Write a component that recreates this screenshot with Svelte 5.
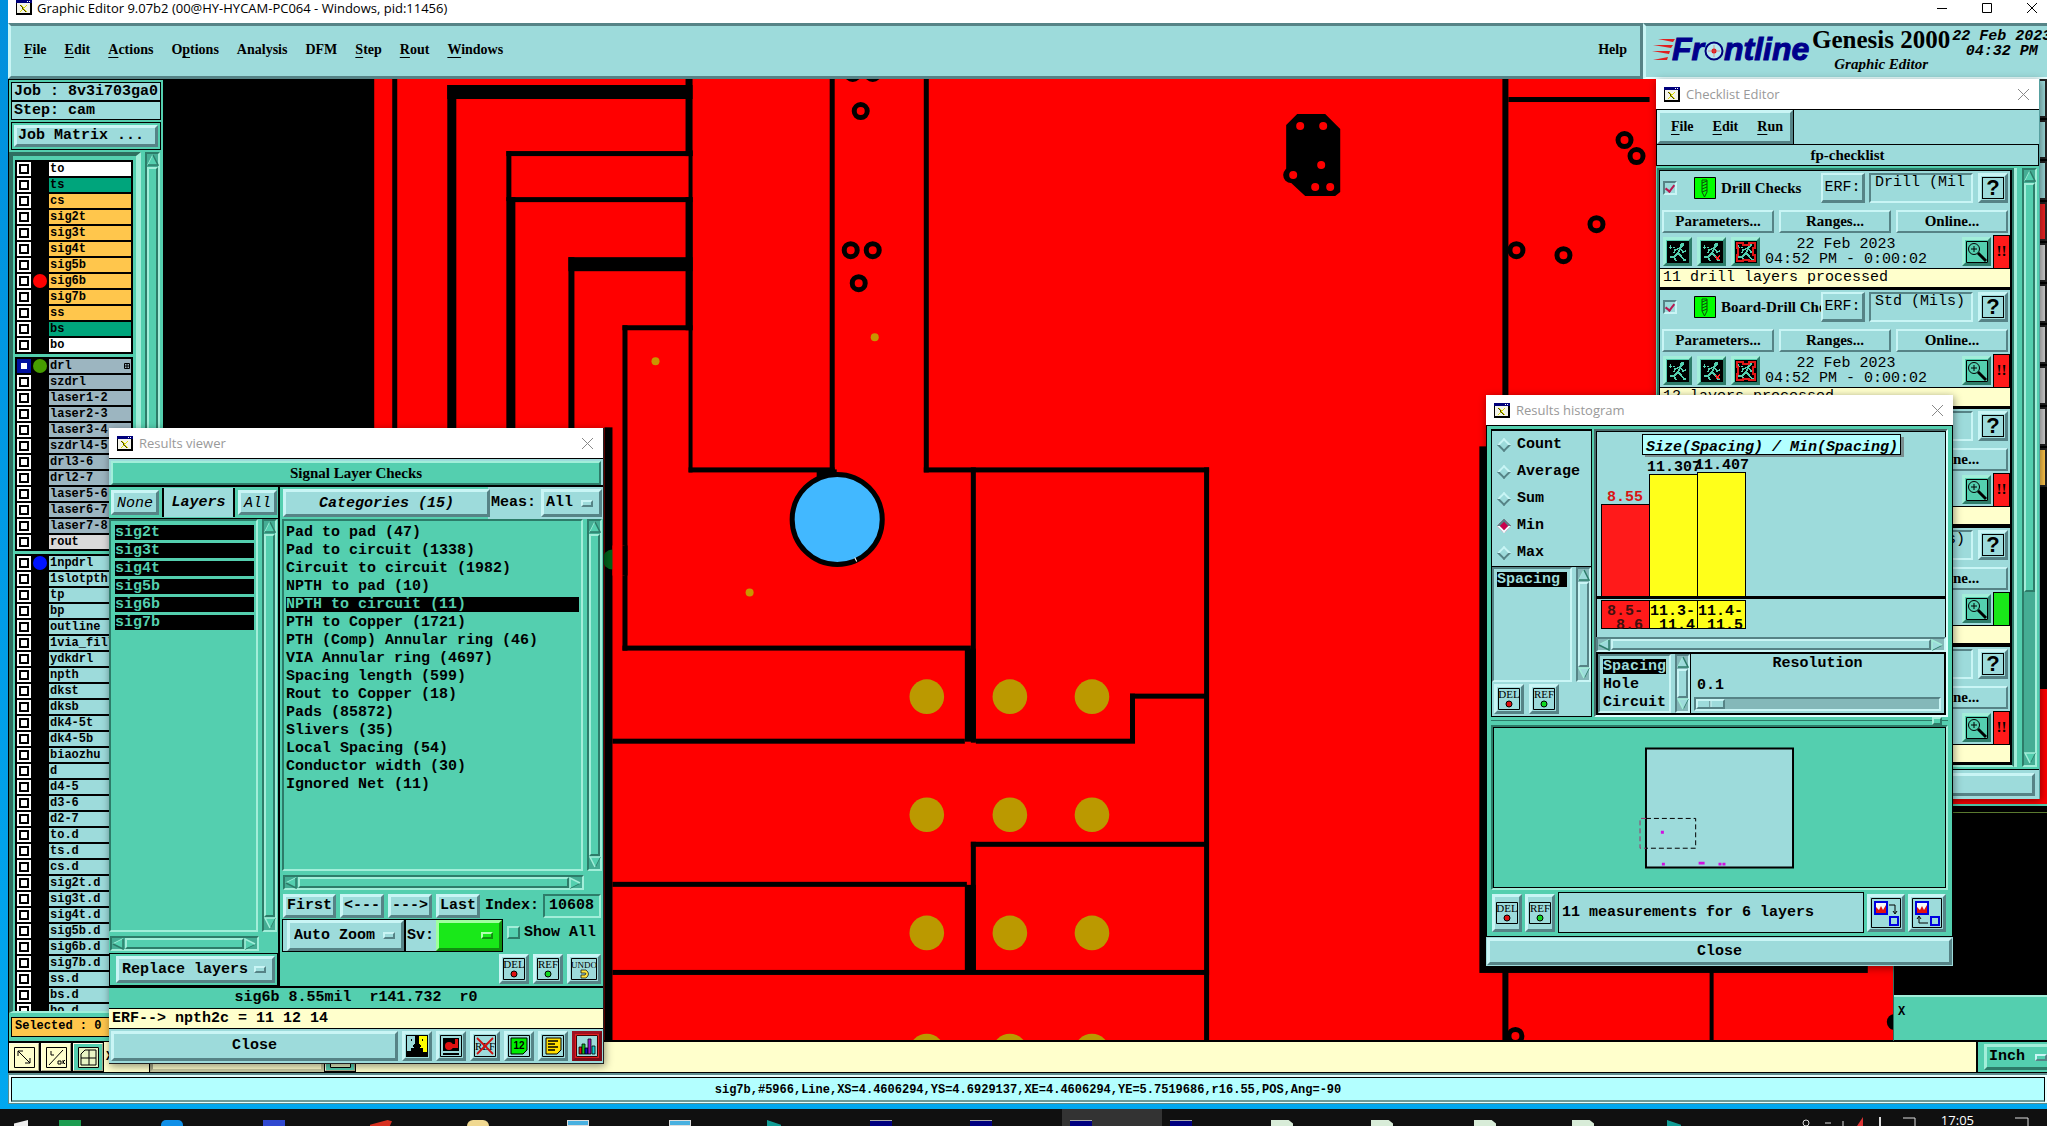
<script lang="ts">
  const menus = [
    ['F', 'ile'], ['E', 'dit'], ['A', 'ctions'], ['O', 'ptions', 1], ['', 'Analysis'],
    ['', 'DFM'], ['S', 'tep'], ['R', 'out'], ['W', 'indows']
  ];

  type Layer = { name: string; tone: string; dot?: string; on?: boolean; mark?: boolean };
  const mk = (names: string, tone: string): Layer[] => names.split(' ').map((name) => ({ name, tone }));

  const groups: Layer[][] = [
    [
      { name: 'to', tone: 'white' }, { name: 'ts', tone: 'green' },
      ...mk('cs sig2t sig3t sig4t sig5b', 'amber'),
      { name: 'sig6b', tone: 'amber', dot: 'red' },
      ...mk('sig7b ss', 'amber'),
      { name: 'bs', tone: 'green' }, { name: 'bo', tone: 'white' }
    ],
    [
      { name: 'drl', tone: 'slate', dot: 'olive', on: true, mark: true },
      ...mk('szdrl laser1-2 laser2-3 laser3-4 szdrl4-5 drl3-6 drl2-7 laser5-6 laser6-7 laser7-8', 'slate'),
      { name: 'rout', tone: 'silver' }
    ],
    [
      { name: '1npdrl', tone: 'aqua', dot: 'blue' },
      ...mk('1slotpth tp bp outline 1via_fill ydkdrl npth dkst dksb dk4-5t dk4-5b biaozhu d d4-5 d3-6 d2-7 to.d ts.d cs.d sig2t.d sig3t.d sig4t.d sig5b.d sig6b.d sig7b.d ss.d bs.d bo.d', 'aqua')
    ]
  ];

  const sigLayers = ['sig2t', 'sig3t', 'sig4t', 'sig5b', 'sig6b', 'sig7b'];
  const categories = [
    'Pad to pad (47)', 'Pad to circuit (1338)', 'Circuit to circuit (1982)', 'NPTH to pad (10)',
    'NPTH to circuit (11)', 'PTH to Copper (1721)', 'PTH (Comp) Annular ring (46)',
    'VIA Annular ring (4697)', 'Spacing length (599)', 'Rout to Copper (18)', 'Pads (85872)',
    'Slivers (35)', 'Local Spacing (54)', 'Conductor width (30)', 'Ignored Net (11)'
  ];
  let category = $state(4);

  const checks = [
    { name: 'Drill Checks', erf: 'Drill (Mil', note: '11 drill layers processed', ok: false },
    { name: 'Board-Drill Che', erf: 'Std (Mils)', note: '12 layers processed', ok: false },
    { name: 'Signal Layer', erf: 'Outer', note: '', ok: false },
    { name: 'Power Checks', erf: 'Std (Mils)', note: '', ok: true },
    { name: 'Solder Mask', erf: 'Outer', note: '', ok: false }
  ];

  const stats = ['Count', 'Average', 'Sum', 'Min', 'Max'];
  let stat = $state('Min');

  const bars = [
    { v: '8.55', lo: '8.5-', hi: '8.6', x: 4, end: 46, top: 72, fill: '#ff1a1a', ink: '#d91414', lab: '#401010' },
    { v: '11.307', lo: '11.3-', hi: '11.4', x: 52, end: 98, top: 42, fill: '#ffff1a', ink: '#000', lab: '#000' },
    { v: '11.407', lo: '11.4-', hi: '11.5', x: 100, end: 146, top: 40, fill: '#ffff1a', ink: '#000', lab: '#000' }
  ];

  const padX = [926, 1009, 1091];
  const padY = [696, 814, 932, 1050];
  const vias = [[860, 111], [850, 250], [872, 250], [858, 283], [852, 73], [872, 73], [1623, 140], [1635, 156], [1595, 224], [1562, 255], [1515, 250], [1514, 1035]];
  // black gaps in the copper: x, y, width, height
  const gaps = [
    [392, 79, 5, 360], [447, 85, 9, 360], [447, 85, 245, 14], [506, 151, 5, 50], [506, 197, 9, 240],
    [506, 151, 186, 5], [511, 197, 181, 5], [568, 257, 6, 180], [568, 257, 124, 14], [685, 79, 7, 77],
    [688, 150, 4, 322], [685, 197, 7, 133], [622, 325, 70, 5], [622, 325, 5, 325], [622, 645, 348, 5],
    [829, 79, 5, 392], [688, 467, 146, 5], [816, 469, 20, 9], [923, 79, 5, 393], [923, 467, 285, 5],
    [970, 467, 5, 275], [964, 648, 11, 93], [612, 738, 352, 5], [975, 738, 159, 5], [1129, 693, 5, 49],
    [1129, 693, 78, 5], [1203, 467, 5, 580], [970, 841, 236, 5], [970, 841, 5, 131], [964, 884, 11, 88],
    [612, 881, 354, 5], [612, 969, 596, 5], [604, 427, 8, 620], [1501, 79, 6, 970], [1507, 97, 141, 5],
    [1478, 446, 388, 526], [1708, 970, 4, 80]
  ];
  const tasks = [
    [24, 'win'], [69, 'green'], [171, 'sky'], [273, 'disk'], [380, 'fox'], [477, 'folder'], [577, 'screen'],
    [679, 'screen'], [777, 'bird'], [880, 'term'], [980, 'term'], [1080, 'term'], [1180, 'term'],
    [1281, 'doc'], [1381, 'doc'], [1484, 'doc'], [1582, 'doc'], [1677, 'bird']
  ];
</script>

{#snippet arrow(dir: string)}
  <button class="arrow" aria-label={'Scroll ' + dir}>
    <svg viewBox="0 0 12 12" width="12" height="12">
      {#if dir === 'up'}<path class="l" d="M6 1 1 11M6 1v0" /><path class="d" d="M6 1l5 10H1" />
      {:else if dir === 'down'}<path class="d" d="M11 1 6 11" /><path class="l" d="M6 11 1 1h10" />
      {:else if dir === 'left'}<path class="l" d="M11 1 1 6" /><path class="d" d="M1 6l10 5V1" />
      {:else}<path class="d" d="M1 11 11 6" /><path class="l" d="M11 6 1 1v10" />{/if}
    </svg>
  </button>
{/snippet}

{#snippet vbar(tone: string)}
  <div class="vbar {tone}">{@render arrow('up')}<div class="thumb"></div>{@render arrow('down')}</div>
{/snippet}
{#snippet hbar(tone: string)}
  <div class="hbar {tone}">{@render arrow('left')}<div class="thumb"></div>{@render arrow('right')}</div>
{/snippet}

{#snippet appIcon()}
  <svg class="app-icon" viewBox="0 0 16 15" width="16" height="15" shape-rendering="crispEdges">
    <path d="M0 0h16v15H0z" fill="#000" /><path d="M1 3h13v10H1z" fill="#f4f4ea" /><path d="M0 0h16v3H0z" fill="#00007b" />
    <path d="M11 1h1v1h-1zM13 1h1v1h-1z" fill="#fff" />
    <path d="M4 5h2l5 7H9z" fill="#444400" /><path d="M10 5h1l-6 7H3z" fill="#d8d800" /><path d="M5 5h1l5 7h-1z" fill="#d8d800" />
  </svg>
{/snippet}

{#snippet tag(label: string, color: string)}
  {@const w = color ? 22 : 26}
  <svg viewBox="0 0 {w} 22" width={w} height="22">
    <path d="M.5.5h{w - 1}v21H.5z" fill="none" stroke="#000" />
    <text x={w / 2} y="10" text-anchor="middle" class={color ? 'tiny' : 'tiny narrow'}>{label}</text>
    {#if color}<circle cx="11" cy="16" r="3" fill={color} stroke="#000" />
    {:else}<path d="M10 12h5q5 4 0 8h-5v-3h4q2-2 0-2h-4z" fill="#ffe640" stroke="#000" stroke-width=".7" />{/if}
  </svg>
{/snippet}

{#snippet runner(kind: number)}
  <svg viewBox="0 0 22 22" width="22" height="22" shape-rendering="crispEdges">
    <path d="M0 0h22v22H0z" fill="#000" />
    <g fill="none" stroke="#54cfaf" stroke-width="1.6">
      <circle cx="15" cy="4" r="1.2" fill="#54cfaf" />
      <path d="M14 6 11 12M13 7 8 9l-1 3M14 8l2 3 3-1M11 12l3 3 3 4h2M11 12l-4 4H3M7 16l2 4" />
      <path d="M2 6h3M6 6h2M3 4v4" stroke-width="1" />
    </g>
    {#if kind === 1}<path d="M14 15l5 4M19 14l-4 5" stroke="#f22" stroke-width="1.4" />{/if}
    {#if kind === 2}<path d="M2 2h6v2h6V2h6v5h-2v7h2v6h-6v-1H8v1H2v-6h1V7H2z" fill="none" stroke="#e01818" stroke-width="1.3" />{/if}
  </svg>
{/snippet}

{#snippet mag()}
  <svg viewBox="0 0 22 22" width="22" height="22">
    <path d="M.5.5h21v21H.5z" fill="none" stroke="#000" />
    <circle cx="8" cy="8" r="5.5" fill="none" stroke="#000" /><path d="M5 8h6M8 5v6" stroke="#000" />
    <path d="M12 12l8 8" stroke="#000" stroke-width="3" />
  </svg>
{/snippet}

<div class="desktop">
  <div class="app">
    <header class="titlebar main-title">
      {@render appIcon()}
      <span>Graphic Editor 9.07b2 (00@HY-HYCAM-PC064 - Windows, pid:11456)</span>
      <button class="wbtn push" aria-label="Minimize"><svg width="10" height="10"><path d="M0 5.5h10" stroke="#000" /></svg></button>
      <button class="wbtn" aria-label="Maximize"><svg width="10" height="10"><path d="M.5.5h9v9h-9z" fill="none" stroke="#000" /></svg></button>
      <button class="wbtn" aria-label="Close"><svg width="10" height="10"><path d="M0 0l10 10M10 0 0 10" stroke="#000" /></svg></button>
    </header>

    <div class="head">
      <nav class="menubar">
        {#each menus as [key, rest, at]}
          <button class="menu">{#if at}O<u>p</u>tions{:else}{#if key}<u>{key}</u>{/if}{rest}{/if}</button>
        {/each}
        <button class="menu push">Help</button>
      </nav>
      <div class="brand">
        <svg viewBox="0 0 160 30" width="160" height="30">
          <path d="M6 3h17l-2 3zM1 9h20l-2 3zM0 15h18l-1 3zM1 24l15-3-1 3z" fill="#e02020" />
          <text x="20" y="24" class="logo">Fr</text>
          <circle cx="62" cy="15" r="8.5" fill="#b8e8f0" stroke="#00007b" stroke-width="2" />
          <circle cx="62" cy="15" r="2.5" fill="#e01010" /><path d="M56 15h12M62 9v12" stroke="#e06060" stroke-width=".6" />
          <text x="72" y="24" class="logo">ntline</text>
        </svg>
        <div class="product"><strong>Genesis 2000</strong><em>Graphic Editor</em></div>
        <div class="clock"><span>22 Feb 2023</span><span>04:32 PM</span></div>
      </div>
    </div>

    <div class="body">
      <aside class="side">
        <div class="jobs">
          <div class="cell">Job : 8v3i703ga0</div>
          <div class="cell">Step: cam</div>
          <div class="cell matrix"><button class="raised aqua">Job Matrix ...</button></div>
        </div>
        <div class="layers">
          <div class="well">
            {#each groups as rows}
              <ul class="group">
                {#each rows as r}
                  <li>
                    <input type="checkbox" aria-label={r.name} checked={r.on} />
                    <span class="dot {r.dot ?? ''}"></span>
                    <span class="lname {r.tone}">{r.name}{#if r.mark}<svg width="6" height="6"><path d="M.5.5h5v5h-5zM3 0v6M0 3h6" fill="none" stroke="#000" /></svg>{/if}</span>
                  </li>
                {/each}
              </ul>
            {/each}
          </div>
          {@render vbar('teal')}
        </div>
        <div class="selbox"><div class="selected">Selected : 0</div></div>
      </aside>

      <svg class="canvas" viewBox="163 79 1730 961" preserveAspectRatio="xMinYMin slice">
        <path d="M163 79h2200v1100H163z" fill="#000" />
        <path d="M374 79h1519v961H374z" fill="#f00" />
        {#each gaps as [x, y, w, h]}<rect {x} {y} width={w} height={h} />{/each}
        <path d="M1296 114h28l15 15v63l-5 4h-30l-14-13-5-3v-55z" /><circle cx="1290" cy="175" r="8" />
        {#each [[1299, 126], [1322, 126], [1320, 165], [1292, 175], [1314, 187], [1329, 187]] as [cx, cy]}
          <circle {cx} {cy} r="4" fill="#f00" />
        {/each}
        {#each vias as [cx, cy]}<circle {cx} {cy} r="6.5" fill="#f00" stroke="#000" stroke-width="5" />{/each}
        <circle cx="836.5" cy="519" r="45" fill="#42b8ff" stroke="#000" stroke-width="5" />
        <path d="M854 557l2 4" stroke="#fff" />
        {#each padY as cy}{#each padX as cx}<circle {cx} {cy} r="17.3" fill="#bb9900" />{/each}{/each}
        {#each [[655, 361], [874, 337], [749, 592]] as [cx, cy]}<circle {cx} {cy} r="4" fill="#c89600" />{/each}
        <circle cx="612" cy="559" r="10" fill="#00641a" /><path d="M612 545h12v30h-12z" fill="#f00" /><path d="M622 545h5v30h-5z" />
        <circle cx="1893" cy="1021" r="8" />
        <path d="M163 1039h1730v2H163z" />
      </svg>

      <aside class="right">
        <div class="tools">
          {#each ['aqua', 'aqua', 'aqua', 'hot', 'grey', 'grey dotted', 'grey lines', 'grey', 'grey', 'gold'] as t}<button class="tool {t}" aria-label="Tool"></button>{/each}
        </div>
        <div class="dark"></div>
        <div class="redblock"></div>
        <div class="mini"></div>
        <div class="coords">X</div>
      </aside>
    </div>

    <div class="toolbar">
      <button class="tb" aria-label="Snap"><svg width="21" height="21"><path d="M.5.5h20v20H.5zM4 9V4h5M4 4l12 12M16 11v5h-5" fill="none" stroke="#000" /></svg></button>
      <button class="tb" aria-label="Angle"><svg width="21" height="21"><path d="M.5.5h20v20H.5zM3 18 17 3M5 4v4h3M12 14h3v3h-3zM17 13v4M19 13l-2 2 2 2" fill="none" stroke="#000" /></svg></button>
      <button class="tb teal" aria-label="Grid"><svg width="21" height="21"><path d="M.5.5h20v20H.5zM3 7l4-4h11v15H3zM11 3v15M3 11h15" fill="none" stroke="#000" /></svg></button>
      <label class="xy"><span>X</span><input type="text" aria-label="X Y position" /></label>
      <button class="tb teal" aria-label="Enter"><svg width="21" height="21"><path d="M.5.5h20v20H.5zM5 16h8v-5" fill="none" stroke="#000" /></svg></button>
      <div class="grow"></div>
      <div class="units"><label class="opt teal"><select aria-label="Units"><option>Inch</option></select><i></i></label></div>
    </div>
    <div class="status"><div>sig7b,#5966,Line,XS=4.4606294,YS=4.6929137,XE=4.4606294,YE=5.7519686,r16.55,POS,Ang=-90</div></div>
  </div>

  <footer class="taskbar">
    <div class="active-task"></div>
    {#each tasks as [x, kind]}<span class="task {kind}" style="left:{x}px"></span>{/each}
    <time>17:05</time>
    <svg class="tray" viewBox="0 0 250 17" width="250" height="17"><g fill="none" stroke="#ddd"><circle cx="9" cy="14" r="3" /><path d="M28 14h6M46 12v5M106 9h12v8M218 9h13v8" /></g><path d="M60 17l6-9v9z" fill="#d33" /><path d="M82 8h2v9h-2z" fill="#ddd" /></svg>
  </footer>

  <section class="win checklist">
    <header class="titlebar">{@render appIcon()}<span>Checklist Editor</span><button class="wbtn push" aria-label="Close"><svg width="11" height="11"><path d="M0 0l11 11M11 0 0 11" stroke="#888" /></svg></button></header>
    <div class="cmenu"><nav class="raised aqua"><button class="menu"><u>F</u>ile</button><button class="menu"><u>E</u>dit</button><button class="menu"><u>R</u>un</button></nav></div>
    <div class="cname">fp-checklist</div>
    <div class="cbody">
      <div class="cards">
        {#each checks as c, i}
          <article>
            <div class="crow">
              <input type="checkbox" class="tick" aria-label={c.name} checked />
              <svg class="drill" viewBox="0 0 22 22" width="22" height="22"><path d="M.5.5h21v21H.5z" fill="#0f0" stroke="#000" /><path d="M8 3h5v12l-2.500 5L8 15zM8 6l5-2M8 9l5-2M8 12l5-2M8 15l5-2" fill="none" stroke="#0a4a0a" /></svg>
              <span class="ctitle">{c.name}</span>
              <label class="lab" for={'erf' + i}>ERF:</label>
              <input class="erf" id={'erf' + i} type="text" value={c.erf} />
              <button class="raised aqua q" aria-label="Help"><span>?</span></button>
            </div>
            <div class="crow three"><button class="raised aqua">Parameters...</button><button class="raised aqua">Ranges...</button><button class="raised aqua">Online...</button></div>
            <div class="crow run">
              {#each [0, 1, 2] as k}<button class="raised teal sq" aria-label="Run">{@render runner(k)}</button>{/each}
              <div class="when"><span>22 Feb 2023</span><span>04:52 PM - 0:00:02</span></div>
              <button class="raised teal sq push" aria-label="Zoom to results">{@render mag()}</button>
              <div class="flag" class:ok={c.ok}>{c.ok ? '' : '!!'}</div>
            </div>
            <div class="note">{c.note}</div>
          </article>
        {/each}
      </div>
      <div class="cscroll">{@render vbar('teal deep')}</div>
    </div>
    <div class="cclose"><button class="raised aqua" aria-label="Close checklist"></button></div>
  </section>

  <section class="win viewer">
    <header class="titlebar">{@render appIcon()}<span>Results viewer</span><button class="wbtn push" aria-label="Close"><svg width="11" height="11"><path d="M0 0l11 11M11 0 0 11" stroke="#888" /></svg></button></header>
    <div class="vhead"><div>Signal Layer Checks</div></div>
    <div class="vmain">
      <div class="vleft">
        <div class="vtop"><button class="raised aqua it">None</button><b class="it">Layers</b><button class="raised aqua it">All</button></div>
        <div class="listwrap">
          <ul class="list">{#each sigLayers as l}<li class="sel">{l}</li>{/each}</ul>
          {@render vbar('teal')}
        </div>
        <div class="hwrap">{@render hbar('teal')}</div>
        <div class="vfoot"><label class="opt aqua"><select aria-label="Layer mode"><option>Replace layers</option></select><i></i></label></div>
      </div>
      <div class="vright">
        <div class="vtop cat"><button class="raised aqua it bold">Categories (15)</button><label class="meas"><span>Meas:</span><span class="opt aqua"><select><option>All</option></select><i></i></span></label></div>
        <div class="listwrap">
          <ul class="list">{#each categories as c, i}<li><button class:sel={i === category} onclick={() => (category = i)}>{c}</button></li>{/each}</ul>
          {@render vbar('teal')}
        </div>
        <div class="hwrap">{@render hbar('teal')}</div>
        <div class="nav">
          <button class="raised aqua">First</button><button class="raised aqua">&lt;---</button><button class="raised aqua">---&gt;</button><button class="raised aqua">Last</button>
          <label for="idx">Index:</label><input id="idx" type="text" value="10608" />
        </div>
        <div class="zoomrow">
          <div class="frame"><label class="opt aqua"><select aria-label="Zoom mode"><option>Auto Zoom</option></select><i></i></label></div>
          <label class="frame sv"><span>Sv:</span><span class="opt lime"><select><option></option></select><i></i></span></label>
          <label class="showall"><input type="checkbox" />Show All</label>
        </div>
        <div class="tags"><button class="raised aqua sq" aria-label="Delete">{@render tag('DEL', '#e01010')}</button><button class="raised aqua sq" aria-label="Reference">{@render tag('REF', '#10d820')}</button><button class="raised aqua sq wide" aria-label="Undo">{@render tag('UNDO', '')}</button></div>
      </div>
    </div>
    <div class="vinfo">sig6b 8.55mil&nbsp; r141.732&nbsp; r0</div>
    <div class="verf">ERF--&gt; npth2c = 11 12 14</div>
    <div class="vclose">
      <button class="raised aqua wideb">Close</button>
      <button class="raised aqua sq" aria-label="Compare"><svg width="22" height="22" shape-rendering="crispEdges"><path d="M0 0h22v22H0z" fill="#000" /><path d="M1 1h8v7l-2 3 1 2H5v3H1z" fill="#9ddbdb" /><path d="M13 1h8v16h-4v-4h-3l1-2-2-3z" fill="#ff0" /><path d="M5 4h1v2H5zM16 4h1v2h-1z" fill="#000" /></svg></button>
      <button class="raised aqua sq" aria-label="Highlight"><svg width="22" height="22"><path d="M.5.5h21v21H.5z" fill="none" stroke="#000" /><path d="M3 3h16v13H3zM3 18h16v2H3z" /><circle cx="9" cy="11" r="4" fill="#e01010" /><path d="M12 9h3V4h3v9h-6z" fill="#e01010" /></svg></button>
      <button class="raised aqua sq" aria-label="Clear reference"><svg width="22" height="22"><path d="M.5.5h21v21H.5z" fill="none" stroke="#000" /><text x="11" y="15" text-anchor="middle" class="tiny">REF</text><path d="M3 3l16 16M19 3 3 19" stroke="#d01010" stroke-width="1.8" /></svg></button>
      <button class="raised aqua sq" aria-label="Count"><svg width="22" height="22"><path d="M.5.5h21v21H.5z" fill="none" stroke="#000" /><path d="M3 3h16v12l-4 4H3z" fill="#0e0" stroke="#000" /><text x="11" y="14" text-anchor="middle" class="num">12</text></svg></button>
      <button class="raised aqua sq" aria-label="Report"><svg width="22" height="22"><path d="M.5.5h21v21H.5z" fill="none" stroke="#000" /><path d="M4 3h15v12l-4 4H4z" fill="#fd0" stroke="#000" /><path d="M6 6h10M6 9h7M6 12h10M6 15h7" stroke="#000" stroke-width="1.400" /></svg></button>
      <button class="raised hotb sq" aria-label="Histogram"><svg width="22" height="22"><path d="M.5.5h21v21H.5z" fill="#9ddbdb" stroke="#400" /><g stroke="#000" stroke-width=".8"><path d="M3 12h3v7H3z" fill="#e01010" /><path d="M6 9h3v10H6z" fill="#10c020" /><path d="M9 13h3v6H9z" fill="#1010c0" /><path d="M12 4h3v15h-3z" fill="#a010c0" /><path d="M16 11h3v8h-3z" fill="#10d0d0" /></g></svg></button>
    </div>
  </section>

  <section class="win histogram">
    <header class="titlebar">{@render appIcon()}<span>Results histogram</span><button class="wbtn push" aria-label="Close"><svg width="11" height="11"><path d="M0 0l11 11M11 0 0 11" stroke="#888" /></svg></button></header>
    <div class="hbody">
      <div class="htop">
        <div class="hleft">
          <div class="stats" role="radiogroup" aria-label="Statistic">
            {#each stats as s}<label><input type="radio" name="stat" value={s} bind:group={stat} />{s}</label>{/each}
          </div>
          <div class="listwrap aq"><ul class="list"><li class="sel">Spacing</li></ul>{@render vbar('aqua')}</div>
          <div class="tags left"><button class="raised aqua sq" aria-label="Delete">{@render tag('DEL', '#e01010')}</button><button class="raised aqua sq" aria-label="Reference">{@render tag('REF', '#10d820')}</button></div>
        </div>
        <div class="hright">
          <svg class="chart" shape-rendering="crispEdges">
            <path d="M48 5h259v20H48z" fill="#7a8f90" /><path d="M45.500 2.500h258v20h-258z" fill="#b3ffff" stroke="#000" />
            <text x="175" y="19" text-anchor="middle" font-style="italic">Size(Spacing) / Min(Spacing)</text>
            {#each bars as b}
              <rect x={b.x + 0.5} y={b.top + 0.5} width="48" height={165 - b.top} fill={b.fill} stroke="#000" />
              <text x={b.v.length > 4 ? b.x - 2 : b.x + 6} y={b.top - 3} fill={b.ink}>{b.v}</text>
              <rect x={b.x + 0.5} y="168.500" width="48" height="28" fill={b.fill} stroke="#000" />
              <text x={b.end} y="183" text-anchor="end" fill={b.lab}>{b.lo}</text>
              <text x={b.end} y="197" text-anchor="end" fill={b.lab}>{b.hi}</text>
            {/each}
            <path d="M0 164h600v3H0z" />
          </svg>
          {@render hbar('aqua')}
          <div class="hbot">
            <ul class="list"><li class="sel">Spacing</li><li>Hole</li><li>Circuit</li></ul>
            {@render vbar('aqua')}
            <div class="resol"><label for="res">Resolution</label><output for="res">0.1</output><input id="res" type="range" min="0" max="10" value="0" /></div>
          </div>
        </div>
      </div>
      <div class="sash"><i></i></div>
      <svg class="map" viewBox="1491 727 456 161" height="165">
        <path d="M1645 748h148v120h-148z" fill="#9ddbdb" stroke="#000" stroke-width="2" />
        <path d="M1645 818.500h50v30h-50" fill="none" stroke="#000" stroke-dasharray="5 3" /><path d="M1645 818.500h-6v30h6" fill="none" stroke="#a03070" stroke-dasharray="5 3" />
        <path d="M1660 831h3v3h-3zM1661 863h3v3h-3zM1698 862h6v3h-6zM1718 863h3v3h-3zM1722 863h3v3h-3z" fill="#d010e0" />
      </svg>
      <div class="hinfo">
        <button class="raised aqua sq" aria-label="Delete">{@render tag('DEL', '#e01010')}</button><button class="raised aqua sq" aria-label="Reference">{@render tag('REF', '#10d820')}</button>
        <div>11 measurements for 6 layers</div>
        {#each [0, 1] as k}
          <button class="raised aqua sq" aria-label={k ? 'Load' : 'Save'}><svg width="30" height="30"><path d="M.5.5h29v29H.5z" fill="none" stroke="#000" /><path d="M4 4h12v12H4z" fill="#f8f8f8" stroke="#0000e0" stroke-width="2" /><path d="M5 15V9l3 3 2-4 2 4 3-5v8z" fill="#e01010" /><path d="M19 19h8v8h-8z" fill="none" stroke="#0000e0" stroke-width="2" />
            {#if k}<path d="M16 25H7v-6M5 21l2-3 2 3" fill="none" stroke="#000" />{:else}<path d="M18 7h6v8M22 13l2 3 2-3" fill="none" stroke="#000" />{/if}</svg></button>
        {/each}
      </div>
    </div>
    <div class="hclose"><button class="raised aqua">Close</button></div>
  </section>
</div>

<style>
  :global(body) { margin: 0; overflow: hidden; background: #0099e6; }
  .desktop {
    --b: #9ddbdb; --bh: #c9f5f5; --bd: #568386;
    --t: #54cfaf; --th: #a2eed9; --td: #2d7c69;
    --mono: "Liberation Mono", "DejaVu Sans Mono", monospace;
    --serif: "Liberation Serif", "Times New Roman", serif;
    position: relative; display: flex; flex-direction: column; width: 100%; height: 100vh; overflow: hidden;
    background: linear-gradient(#0090dc, #00a8f0); font: bold 15px/18px var(--mono); color: #000;
  }
  .desktop :global(*) { box-sizing: border-box; }
  button, input, select { font: inherit; color: inherit; margin: 0; padding: 0; border: 0; background: none; border-radius: 0; }
  button { cursor: pointer; white-space: nowrap; }
  ul { list-style: none; margin: 0; padding: 0; }
  svg { display: block; }
  .push { margin-left: auto; }
  .it { font-style: italic; font-weight: normal; }
  .bold, b.it { font-weight: bold; }
  .tiny { font: 11px var(--serif); }
  .tiny.narrow { font-size: 9px; }
  .num { font: bold 10px "Liberation Sans", sans-serif; }

  .raised { border: 3px solid; background: var(--b); border-color: var(--bh) var(--bd) var(--bd) var(--bh); }
  .raised.teal { background: var(--t); border-color: var(--th) var(--td) var(--td) var(--th); }
  .raised.hotb { border-color: #a01020 #7a0c18 #7a0c18 #a01020; outline: 1px solid #e02020; outline-offset: -4px; }
  .sq { display: flex; align-items: center; justify-content: center; width: 30px; height: 30px; flex: none; }

  .app { flex: 1; min-height: 0; margin: 0 0 5px 8px; display: flex; flex-direction: column; background: var(--t); }
  .titlebar { display: flex; align-items: center; gap: 6px; height: 30px; padding: 0 10px 0 8px; background: #fff; color: #999; font: 13px/18px "Open Sans", "Noto Sans", sans-serif; }
  .main-title { height: 23px; color: #000; padding-bottom: 8px; gap: 5px; flex: none; }
  .main-title .wbtn { width: 10px; height: 10px; margin-left: 30px; }
  .main-title .push { margin-left: auto; }
  .wbtn { display: flex; flex: none; }

  .head { display: flex; height: 56px; flex: none; background: var(--b); }
  .menubar { flex: 1; display: flex; align-items: center; gap: 18px; padding: 0 13px 2px; border: 3px solid; border-color: var(--bd) var(--bd) var(--bd) var(--bh); }
  .menu { font: bold 14px/20px var(--serif); }
  .menu u { text-underline-offset: 3px; }
  .brand { width: 404px; display: flex; padding-left: 6px; border-top: 3px solid var(--bd); border-left: 3px solid var(--bh); border-bottom: 2px solid #e8ffff; white-space: nowrap; }
  .brand > svg { margin-top: 10px; flex: none; }
  .logo { font: italic bold 32px "Liberation Sans", sans-serif; fill: #00008b; stroke: #00008b; stroke-width: 1; }
  .product { display: flex; flex-direction: column; align-items: center; width: 140px; }
  .product strong { font: bold 25px/28px var(--serif); }
  .product em { font: italic bold 15px/20px var(--serif); }
  .clock { display: flex; flex-direction: column; align-items: center; flex: none; width: 99px; padding: 3px 0; margin-left: 2px; line-height: 15px; font-style: italic; }

  .body { flex: 1; min-height: 0; display: flex; background: #000; }
  .canvas { flex: 1; min-width: 0; height: 100%; }
  .side { width: 155px; display: flex; flex-direction: column; background: var(--t); border: solid #000; border-width: 1px 0 0 1px; overflow: hidden; }
  .jobs { padding: 2px; }
  .cell { height: 19px; padding: 0 2px; border: 1px solid #000; background: var(--b); white-space: nowrap; line-height: 18px; overflow: hidden; }
  .cell + .cell { border-top: 1px solid #000; }
  .matrix { height: 28px; margin-top: 2px; padding: 2px; background: var(--t); }
  .matrix button { width: 100%; height: 22px; text-align: left; line-height: 16px; padding-left: 1px; }
  .layers { flex: 1; min-height: 0; display: flex; gap: 4px; padding-right: 3px; }
  .well { flex: 1; display: flex; flex-direction: column; gap: 3px; overflow: hidden; padding: 4px 3px 0 2px; border: solid; border-width: 4px 5px 2px 4px; border-color: #2f6f60 var(--th) var(--th) #2f6f60; }
  .group { flex: none; padding: 1px 2px; background: #000; }
  .group li { display: flex; align-items: center; height: 16px; gap: 2px; }
  .group input { appearance: none; width: 14px; height: 14px; background: #fff; border: 2px solid #fff; box-shadow: inset 0 0 0 2px #000; }
  .group input:checked { border-color: #0010a0; box-shadow: inset 0 0 0 2px #0010a0; }
  .dot { width: 14px; height: 14px; border-radius: 50%; }
  .red { background: #f00; } .olive { background: #469c00; } .blue { background: #0014ff; }
  .lname { flex: 1; display: flex; align-items: center; justify-content: space-between; height: 14px; padding: 0 1px; font-size: 12px; line-height: 14px; white-space: nowrap; overflow: hidden; }
  .lname.white { background: #fff; } .lname.green { background: #00a57c; } .lname.amber { background: #ffc64c; }
  .lname.slate { background: #9cb5c0; } .lname.silver { background: #dadada; } .lname.aqua { background: var(--b); }
  .selbox { padding: 4px 2px; }
  .selected { height: 20px; padding: 0 3px; border: 1px solid #000; background: #ffc64c; font-size: 12px; line-height: 17px; }

  .vbar, .hbar { display: flex; flex: none; background: #45ad94; border: 2px solid; border-color: var(--td) var(--th) var(--th) var(--td); }
  .vbar { flex-direction: column; width: 15px; }
  .hbar { height: 15px; }
  .vbar.aqua, .hbar.aqua { background: #84b8b9; border-color: var(--bd) var(--bh) var(--bh) var(--bd); }
  .thumb { flex: 1; background: var(--t); border: 2px solid; border-color: var(--th) var(--td) var(--td) var(--th); }
  .aqua > .thumb { background: var(--b); border-color: var(--bh) var(--bd) var(--bd) var(--bh); }
  .deep .thumb { margin-bottom: 160px; }
  .arrow { flex: none; width: 12px; height: 12px; display: flex; margin-bottom: 1px; }
  .hbar .arrow { margin: 0 1px 0 0; }
  .arrow path { fill: var(--t); stroke-width: 1.5; }
  .aqua > .arrow path { fill: var(--b); }
  .arrow .l { stroke: var(--th); } .arrow .d { stroke: var(--td); }

  .right { width: 154px; display: flex; flex-direction: column; border-left: 1px solid #2f6f60; background: #000; }
  .tools { height: 408px; display: flex; flex-direction: column; gap: 2px; background: #000; }
  .tool { flex: 1; background: var(--b); border: 2px solid #222; }
  .hot { background: #e22; } .grey { background: #d0d0d0; } .gold { background: #ffc64c; }
  .dark { height: 202px; background: #000; }
  .redblock { height: 117px; background: #f00; border-bottom: 2px solid #54cfaf; }
  .mini { flex: 1; margin-top: 6px; border-top: 1px solid #5a7a30; }
  .coords { height: 46px; padding: 6px 4px; background: var(--t); border-top: 2px solid var(--th); border-bottom: 1px solid #000; font-size: 12px; }

  .toolbar { height: 32px; flex: none; display: flex; background: #ffffcc; border-top: 1px solid #000; border-bottom: 1px solid #000; }
  .tb { width: 32px; display: flex; align-items: center; justify-content: center; border: 2px solid; border-color: #ffffe8 #a8a888 #a8a888 #ffffe8; outline: 1px solid #000; outline-offset: -1px; }
  .tb.teal { background: var(--t); }
  .tb.teal svg { background: #e8f4c4; }
  .xy { width: 220px; display: flex; align-items: center; gap: 2px; }
  .xy span { flex: none; width: 44px; padding-left: 2px; font-size: 12px; }
  .xy input { flex: 1; min-width: 0; height: 100%; border: 3px solid; border-color: #a8a888 #c8c8a0 #c8c8a0 #a8a888; outline: 1px solid #000; }
  .grow { flex: 1; }
  .units { width: 71px; overflow: hidden; padding: 2px 0 2px 6px; border-left: 2px solid #000; background: var(--t); }
  .units .opt { width: 72px; padding-left: 2px; }
  .opt { display: flex; align-items: center; height: 100%; padding: 0 6px 0 4px; border: 3px solid; background: var(--b); border-color: var(--bh) var(--bd) var(--bd) var(--bh); }
  .opt select { appearance: none; flex: 1; min-width: 0; outline: 0; }
  .opt i { flex: none; width: 12px; height: 7px; border: 2px solid; border-color: var(--bh) var(--bd) var(--bd) var(--bh); }
  .opt.teal { background: var(--t); border-color: var(--th) var(--td) var(--td) var(--th); }
  .opt.lime { background: #19e819; border-color: #a0ffa0 #109010 #109010 #a0ffa0; }
  .opt.lime i { border-color: #b0ffb0 #109010 #109010 #b0ffb0; }
  .status { height: 31px; flex: none; padding: 2px; background: #e8ffff; border: solid #5c8c8c; border-width: 2px 0 1px 1px; }
  .status div { height: 25px; background: #b3ffff; border: 1px solid #000; border-bottom: 2px solid #6a9a9a; text-align: center; font-size: 12px; line-height: 25px; }

  .taskbar { position: relative; height: 17px; flex: none; background: #101010; overflow: hidden; }
  .active-task { position: absolute; left: 1062px; width: 100px; height: 100%; background: #333; }
  .task { position: absolute; top: 11px; width: 22px; height: 6px; margin-left: -10px; background: #fff; }
  .task.win { position: absolute; background: #eee; width: 14px; clip-path: polygon(0 60%, 100% 0, 100% 100%, 0 100%); }
  .task.green { background: #1c9c50; } .task.sky { background: #1090e8; border-radius: 5px 5px 0 0; } .task.disk { background: #3048d0; }
  .task.fox { background: #d83020; clip-path: polygon(0 80%, 80% 0, 100% 20%, 90% 100%, 0 100%); } .task.folder { background: #f0d890; border-radius: 8px 8px 0 0; }
  .task.screen { background: #48b0e0; border: 1px solid #ddd; } .task.bird { background: #109c94; width: 14px; clip-path: polygon(0 0, 100% 80%, 100% 100%, 0 100%); }
  .task.term { background: #000080; border-top: 1px solid #aaa; } .task.doc { background: #d8ecd8; clip-path: polygon(0 0, 80% 0, 100% 60%, 100% 100%, 0 100%); }
  time { position: absolute; right: 73px; top: 2px; color: #fff; font: 13px/18px "Open Sans", sans-serif; }
  .tray { position: absolute; right: 0; top: 0; }

  .win { position: absolute; display: flex; flex-direction: column; box-shadow: 1px 2px 8px rgb(0 0 0 / 45%); }

  .viewer { left: 109px; top: 428px; width: 495px; background: var(--t); border: solid #222; border-width: 0 1px 1px 0; }
  .vhead { height: 29px; padding: 2px; background: var(--b); border-top: 1px solid #000; border-bottom: 2px solid #000; }
  .vhead div { height: 24px; background: var(--t); border: 2px solid; border-color: var(--th) var(--td) var(--td) var(--th); text-align: center; font: bold 15px/20px var(--serif); }
  .vmain { display: flex; border-bottom: 2px solid #000; }
  .vleft { width: 171px; display: flex; flex-direction: column; border-right: 2px solid #000; }
  .vright { flex: 1; min-width: 0; display: flex; flex-direction: column; padding-left: 2px; }
  .vtop { display: flex; align-items: stretch; height: 32px; padding: 3px 1px 3px 2px; border-bottom: 1px solid #000; }
  .vtop button { padding: 2px 3px 0; }
  .vtop b { flex: 1; margin: -2px 3px; line-height: 30px; text-align: center; background: var(--b); border: solid #000; border-width: 0 2px; }
  .cat { padding: 2px 1px; background: linear-gradient(90deg, var(--t) 206px, var(--b) 206px); border: 0; }
  .cat > button { width: 207px; }
  .meas { flex: 1; display: flex; align-items: center; padding-left: 1px; }
  .meas .opt { width: 61px; margin-left: auto; padding-left: 2px; }
  .listwrap { flex: none; display: flex; height: 413px; padding-right: 1px; }
  .vright .listwrap { height: 352px; }
  .list { flex: 1; min-width: 0; padding: 4px 2px 0 4px; margin-right: 4px; border: 2px solid; border-color: var(--td) var(--th) var(--th) var(--td); overflow: hidden; }
  .vright .list { padding-left: 2px; }
  .list li { height: 15px; margin-bottom: 3px; line-height: 16px; white-space: nowrap; }
  .list button { width: 100%; height: 15px; display: block; text-align: left; line-height: 15px; }
  .list .sel { background: #000; color: var(--t); }
  .hwrap { padding: 4px 19px 2px 1px; }
  .vfoot { height: 33px; padding: 2px 2px 2px 6px; border: 1px solid #000; }
  .vfoot .opt { padding-left: 3px; }
  .nav { height: 27px; display: flex; align-items: center; gap: 4px; padding: 0 2px 0 1px; }
  .nav button { height: 24px; padding: 0 1px; line-height: 18px; }
  .nav label { padding-left: 1px; }
  .nav input { flex: 1; min-width: 0; height: 24px; padding-left: 4px; border: 2px solid; border-color: var(--td) var(--th) var(--th) var(--td); }
  .zoomrow { height: 33px; display: flex; align-items: stretch; }
  .frame { width: 123px; border: 1px solid #000; background: var(--b); padding: 0 0 0 4px; }
  .frame.sv { width: 98px; display: flex; align-items: center; padding: 0 0 0 1px; }
  .sv .opt { flex: 1; margin-left: 2px; }
  .showall { display: flex; align-items: center; gap: 4px; padding: 0 0 6px 4px; white-space: nowrap; }
  .showall input { appearance: none; width: 13px; height: 13px; border: 2px solid; border-color: var(--th) var(--td) var(--td) var(--th); }
  .tags { display: flex; justify-content: flex-end; gap: 4px; padding: 2px 2px 2px 4px; }
  .tags .wide { width: 34px; }
  .tags.left { justify-content: flex-start; gap: 5px; padding: 2px; }
  .vinfo { height: 21px; line-height: 20px; text-align: center; white-space: pre; border-bottom: 1px solid #000; }
  .verf { height: 20px; line-height: 19px; padding-left: 3px; background: #ffffcc; border-bottom: 1px solid #000; }
  .vclose { display: flex; gap: 4px; padding: 2px 1px 2px 2px; background: var(--b); }
  .wideb { flex: 1; }

  .histogram { left: 1486px; top: 395px; width: 467px; background: var(--t); }
  .hbody { border: 1px solid #000; padding: 3px 4px; display: flex; flex-direction: column; }
  .htop { display: flex; gap: 2px; height: 288px; }
  .hleft { width: 101px; display: flex; flex-direction: column; background: var(--b); border: solid #000; border-width: 2px 1px 1px; }
  .stats { border-bottom: 1px solid #000; }
  .stats label { height: 27px; display: flex; align-items: center; gap: 8px; padding-left: 7px; }
  .stats input { appearance: none; width: 10px; height: 10px; transform: rotate(45deg); border: 2px solid; border-color: var(--bh) var(--bd) var(--bd) var(--bh); }
  .stats input:checked { background: #c8004c; border-color: var(--bd) #f0ffff #f0ffff var(--bd); }
  .listwrap.aq { flex: 1; height: auto; padding: 0; }
  .histogram .list { border-color: var(--bd) var(--bh) var(--bh) var(--bd); padding: 3px 3px 0; }
  .histogram .sel { color: var(--b); }
  .hright { flex: 1; min-width: 0; display: flex; flex-direction: column; background: var(--b); border: 2px solid; border-color: #4a6a6a #e0ffff #e0ffff #4a6a6a; }
  .chart { width: 100%; flex: 1; min-height: 0; border: 1px solid #000; border-bottom: 0; overflow: hidden; }
  .chart text { font-family: var(--mono); font-size: 15px; font-weight: bold; }
  .hbot { height: 63px; display: flex; border: 2px solid #000; }
  .hbot .list { flex: none; width: 73px; margin-right: 4px; }
  .resol { flex: 1; min-width: 0; display: flex; flex-direction: column; padding: 1px 3px 0; border-left: 1px solid #000; }
  .resol label { text-align: center; } .resol output { padding: 4px 3px 2px; }
  .resol input { appearance: none; width: 100%; height: 14px; background: #84b8b9; border: 2px solid; border-color: var(--bd) var(--bh) var(--bh) var(--bd); }
  .resol input::-webkit-slider-thumb { appearance: none; width: 29px; height: 10px; border: 2px solid; border-color: var(--bh) var(--bd) var(--bd) var(--bh); background: linear-gradient(90deg, var(--b) 11px, var(--bd) 11px, var(--bh) 13px, var(--b) 14px); }
  .sash { height: 8px; display: flex; align-items: center; justify-content: flex-end; background: linear-gradient(var(--t) 3px, var(--td) 3px, var(--td) 4px, var(--t) 4px); }
  .sash i { width: 10px; height: 8px; margin-right: 6px; border: 2px solid; border-color: var(--th) var(--td) var(--td) var(--th); background: var(--t); }
  .map { width: 100%; border: 2px solid; border-color: var(--td) var(--th) var(--th) var(--td); outline: 1px solid #000; outline-offset: -3px; }
  .hinfo { display: flex; align-items: center; gap: 3px; padding: 2px 2px 0 1px; height: 43px; }
  .hinfo div { flex: 1; height: 41px; padding-left: 3px; line-height: 39px; border: 1px solid #000; background: var(--b); }
  .hinfo .sq { height: 38px; }
  .hinfo div ~ .sq { width: 38px; }
  .hclose { padding: 1px; background: var(--b); }
  .hclose button { width: 100%; height: 27px; display: block; }

  .checklist { left: 1656px; top: 79px; width: 384px; background: var(--b); border-right: 1px solid #58a0a0; }
  .cmenu { height: 35px; border-top: 1px solid #000; border-left: 1px solid #000; }
  .cmenu nav { display: flex; align-items: center; gap: 19px; width: 136px; height: 34px; padding: 0 11px; outline: 1px solid #000; }
  .cname { height: 22px; border: 1px solid #000; text-align: center; font: bold 15px/20px var(--serif); }
  .cbody { display: flex; padding: 2px 2px 2px 1px; background: var(--t); }
  .cards { flex: 1; min-width: 0; border: 2px solid; border-color: var(--td) var(--td) var(--th) var(--td); }
  article { height: 119px; display: flex; flex-direction: column; background: var(--b); border: 1px solid #000; border-bottom: 3px solid #000; border-right-width: 2px; }
  .crow { display: flex; align-items: center; height: 36px; padding: 1px 2px 4px 3px; flex: none; }
  .tick { appearance: none; width: 14px; height: 14px; flex: none; border: 2px solid; border-color: var(--bd) var(--bh) var(--bh) var(--bd); }
  .tick:checked { display: flex; }
  .tick:checked::before { content: ""; width: 4px; height: 7px; margin: 0 0 0 2px; border: solid #b81850; border-width: 0 2px 2px 0; transform: rotate(38deg); }
  .drill { flex: none; margin-left: 17px; }
  .ctitle { flex: 1; min-width: 0; overflow: hidden; white-space: nowrap; padding-left: 5px; font: bold 15px/20px var(--serif); }
  .lab { flex: none; width: 44px; height: 30px; font-weight: normal; text-align: center; line-height: 25px; border: 3px solid; border-width: 2px 3px 3px 2px; border-color: var(--bh) var(--bd) var(--bd) var(--bh); }
  .erf { flex: none; width: 104px; height: 30px; margin: 0 5px 0 4px; padding: 0 0 10px 4px; font-weight: normal; border: 2px solid; border-color: var(--bd) var(--bh) var(--bh) var(--bd); }
  .q { width: 30px; height: 30px; display: flex; padding: 1px; flex: none; }
  .q span { flex: 1; border: 1px solid #000; font: bold 22px/20px "Liberation Sans", sans-serif; }
  .three { height: 28px; gap: 5px; padding: 2px; }
  .three button { flex: 1; height: 23px; border-width: 2px; font: bold 15px/18px var(--serif); }
  .run { height: 33px; gap: 5px; padding: 0 0 0 3px; }
  .run .sq { width: 29px; height: 29px; }
  .when { flex: none; display: flex; flex-direction: column; align-items: center; font-weight: normal; line-height: 15px; white-space: nowrap; }
  .flag { width: 17px; height: 34px; text-align: center; background: #ff1a1a; border: 1px solid #000; margin-left: -3px; font: bold 15px/30px var(--serif); }
  .flag.ok { background: #19e819; }
  .note { flex: 1; line-height: 18px; padding-left: 3px; font-weight: normal; background: #ffffcc; border-top: 1px solid #000; white-space: pre; }
  .cscroll { display: flex; padding-left: 5px; border-left: 3px solid var(--th); }
  .cclose { padding: 3px 4px; background: var(--b); border-top: 1px solid #000; }
  .cclose button { width: 100%; height: 23px; display: block; }
</style>
